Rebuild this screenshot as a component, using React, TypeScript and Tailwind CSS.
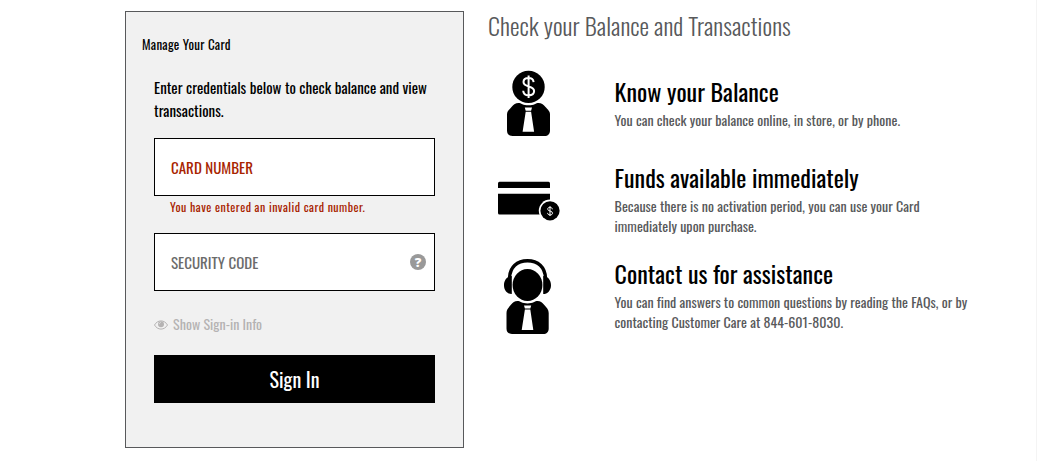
import React from "react";

const BalanceIcon: React.FC = () => (
  <svg width="43" height="66" viewBox="0 0 43 66" fill="#000">
    <circle cx="21.5" cy="16.9" r="16.2" />
    <path
      d="M26.600 12.100C26.300 9.400 24.300 8.100 21.600 8.100c-3 0-5.100 1.600-5.100 4 0 6 10.600 2.600 10.600 9 0 2.700-2.300 4.300-5.400 4.300-3.200 0-5.300-1.600-5.500-4.600M21.600 5.500v22.400"
      fill="none"
      stroke="#fff"
      strokeWidth="2"
    />
    <path d="M11.500 32.900c2.500 0 4.500 2.400 10 2.400s7.500-2.400 10-2.400c3 0 4.700 1.200 7 4.100 2.600 3.200 4.500 4 4.500 7.500V60.500c0 3.500-2 5.500-5.500 5.500H5.500C2 66 0 64 0 60.500V44.500c0-3.500 1.900-4.300 4.500-7.500 2.300-2.900 4-4.100 7-4.100z" />
    <path d="M17.800 37.400h7.200l-.9 3.300h-5.400zM18.700 41.700h5.400l3 20H15.600z" fill="#fff" />
  </svg>
);

const CardIcon: React.FC = () => (
  <svg width="62" height="40" viewBox="0 0 62 40" fill="#000">
    <path d="M0 7V2.500Q0 .7 1.500 .7h49Q52 .7 52 2.500V7zM0 12.700h52v20.800H1.500Q0 33.500 0 32z" />
    <circle cx="52" cy="29.800" r="11.200" fill="#fff" />
    <circle cx="52" cy="29.800" r="9.600" />
    <path
      d="M54.300 28.300c-.1-1.300-1-2-2.300-2-1.400 0-2.300.7-2.300 1.800 0 2.700 4.800 1.200 4.800 4 0 1.200-1 1.900-2.400 1.900-1.500 0-2.500-.8-2.500-2.100M52 25.200v9.800"
      fill="none"
      stroke="#fff"
      strokeWidth="1"
    />
  </svg>
);

const SupportIcon: React.FC = () => (
  <svg width="47" height="75" viewBox="0 0 47 75" fill="#000">
    <path d="M5.500 19C6 8 13 1.700 23.500 1.700S41 8 41.500 19" fill="none" stroke="#000" strokeWidth="3.400" />
    <path d="M7.800 17v18C3.500 35 0 31.500 0 26.200S3.500 17 7.800 17zM39.200 17v18c4.300 0 7.800-3.500 7.800-8.800S43.500 17 39.200 17z" />
    <ellipse cx="23.500" cy="26" rx="14.900" ry="16" />
    <path d="M13.500 42c2.500 0 4.500 2.400 10 2.400S31 42 33.500 42c3 0 4.500 1.200 6.800 4.100 2.500 3.200 4.400 4.400 4.400 7.900V69.500c0 3.500-2 5.500-5.500 5.500H8c-3.500 0-5.500-2-5.500-5.500V54c0-3.500 1.700-4.700 4.200-7.900C9 43.200 10.500 42 13.500 42z" />
    <path d="M20 46.400h7.200l-.9 3.200h-5.400zM20.900 50.600h5.400l3 20.400H17.700z" fill="#fff" />
  </svg>
);

const EyeIcon: React.FC = () => (
  <svg width="14" height="10" viewBox="0 0 14 10" fill="none" stroke="#b5b3b3">
    <path d="M.5 5C2 2.400 4.300.9 7 .9S12 2.400 13.500 5C12 7.600 9.700 9.100 7 9.100S2 7.600.5 5z" />
    <circle cx="7" cy="4.300" r="3" fill="#b5b3b3" stroke="none" />
    <path d="M5.300 4.200c0-1 .7-1.700 1.700-1.700" stroke="#f1f1f1" strokeWidth=".6" />
  </svg>
);

interface FeatureProps {
  icon: React.ReactNode;
  title: string;
  children: React.ReactNode;
}

const Feature: React.FC<FeatureProps> = ({ icon, title, children }) => (
  <div className="flex">
    <div className="w-[126.6px] shrink-0">{icon}</div>
    <div>
      <h2 className="text-[24px] leading-[36px] tracking-[0.03px] text-black">{title}</h2>
      <p className="pt-px text-[14px] leading-5 tracking-[0.02px] text-[#58595b]">{children}</p>
    </div>
  </div>
);

const App: React.FC = () => {
  return (
    <div className="flex h-[461px] w-[1037px] border-r border-[#f4f4f4] bg-white pl-[125px] pt-[11px] font-['Oswald','Open_Sans',sans-serif] font-normal">
      <form className="h-[437px] w-[339px] shrink-0 border border-[#58595b] bg-[#f1f1f1] pt-[22px]">
        <h3 className="pl-4 text-[13px] leading-5 tracking-[0.25px] text-black">Manage Your Card</h3>

        <div className="px-7 pt-[22px]">
          <p className="text-[15px] leading-[23px] tracking-[0.02px] text-black">
            Enter credentials below to check balance and view transactions.
          </p>

          {/* Card number */}
          <div className="mt-4 flex h-[58px] w-[281px] items-center border border-black bg-white px-4 text-[15px] text-[#a82400]">
            CARD NUMBER
          </div>
          <p className="h-[37px] pl-4 pt-px text-[12px] leading-5 tracking-[0.46px] text-[#a82400]">
            You have entered an invalid card number.
          </p>

          {/* Security code */}
          <div className="flex h-[58px] w-[281px] items-center justify-between border border-black bg-white pl-4 pr-2 text-[15px] text-[#6b6b6b]">
            <span>SECURITY CODE</span>
            <span className="flex size-4 items-center justify-center rounded-full bg-[#999] font-['Open_Sans',sans-serif] text-[13px] font-extrabold leading-4 text-white">
              ?
            </span>
          </div>

          <div className="mt-[22px] flex h-5 items-center gap-[5px] text-[14px] text-[#b5b3b3]">
            <div className="pt-[3px]">
              <EyeIcon />
            </div>
            <span className="tracking-[0.03px]">Show Sign-in Info</span>
          </div>

          <button type="button" className="mt-[22px] h-12 w-[281px] bg-black text-[20px] text-white">
            Sign In
          </button>
        </div>
      </form>

      <div className="w-[500px] pl-6">
        <h1 className="h-[59px] text-[24px] font-light leading-[28px] tracking-[0.08px] text-[#58595b]">
          Check your Balance and Transactions
        </h1>

        <div className="flex w-[500px] flex-col">
          <div className="h-[86px] pt-[3px]">
            <Feature icon={<div className="-mt-[3px] pl-[19px]"><BalanceIcon /></div>} title="Know your Balance">
              You can check your balance online, in store, or by phone.
            </Feature>
          </div>
          <div className="h-[96px] pt-[3px]">
            <Feature icon={<div className="pl-[10px] pt-[22px]"><CardIcon /></div>} title="Funds available immediately">
              Because there is no activation period, you can use your Card
              <br />
              immediately upon purchase.
            </Feature>
          </div>
          <div className="pt-[3px]">
            <Feature icon={<div className="pl-[16px] pt-[4px]"><SupportIcon /></div>} title="Contact us for assistance">
              You can find answers to common questions by reading the FAQs, or by
              <br />
              contacting Customer Care at 844-601-8030.
            </Feature>
          </div>
        </div>
      </div>
    </div>
  );
};

export default App;
